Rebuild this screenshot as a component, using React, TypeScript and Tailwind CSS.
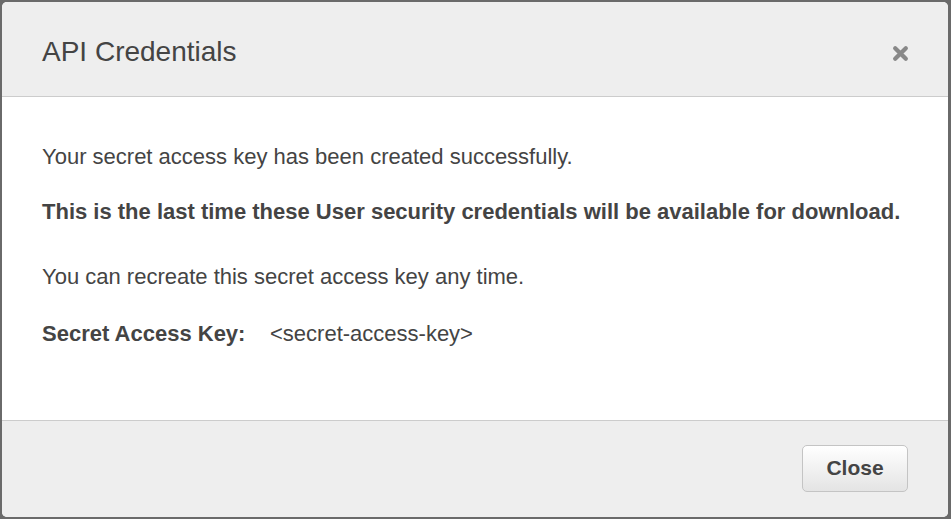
export default function App() {
  return (
    <div
      className="w-[951px] h-[519px] bg-[#6a6a6a] pt-[2px] pl-[2px] pr-[3px] pb-[2px]"
      style={{ fontFamily: '"Liberation Sans", Arial, sans-serif' }}
    >
      <div className="flex flex-col h-full rounded-[5px] overflow-hidden bg-white">
        {/* Header */}
        <div className="h-[95px] shrink-0 flex items-center justify-between bg-[#eeeeee] border-b border-[#cccccc] pl-[40px] pr-[39px]">
          <h1 className="text-[28px] leading-none text-[#444444] pt-[6px]">API Credentials</h1>
          <button className="text-[#888888] pt-[8px]">
            <svg width="17" height="17" viewBox="0 0 16 16">
              <path d="M3 3 L13 13 M13 3 L3 13" stroke="currentColor" strokeWidth="4" strokeLinecap="round" />
            </svg>
          </button>
        </div>

        {/* Body */}
        <div className="flex-1 pl-[40px] pt-[46px] text-[22px] leading-[28px] text-[#444444]">
          <p>Your secret access key has been created successfully.</p>
          <p className="mt-[27px] font-bold">
            This is the last time these User security credentials will be available for download.
          </p>
          <p className="mt-[37px]">You can recreate this secret access key any time.</p>
          <div className="mt-[29px] flex">
            <span className="font-bold w-[228px]">Secret Access Key:</span>
            <span>&lt;secret-access-key&gt;</span>
          </div>
        </div>

        {/* Footer */}
        <div className="h-[97px] shrink-0 flex items-center justify-end bg-[#eeeeee] border-t border-[#cccccc] pr-[40px]">
          <button className="w-[106px] h-[47px] mb-[2px] rounded-[5px] border border-[#c4c4c4] bg-gradient-to-b from-[#ffffff] to-[#e4e4e4] text-[21px] font-bold text-[#444444]">
            Close
          </button>
        </div>
      </div>
    </div>
  )
}
